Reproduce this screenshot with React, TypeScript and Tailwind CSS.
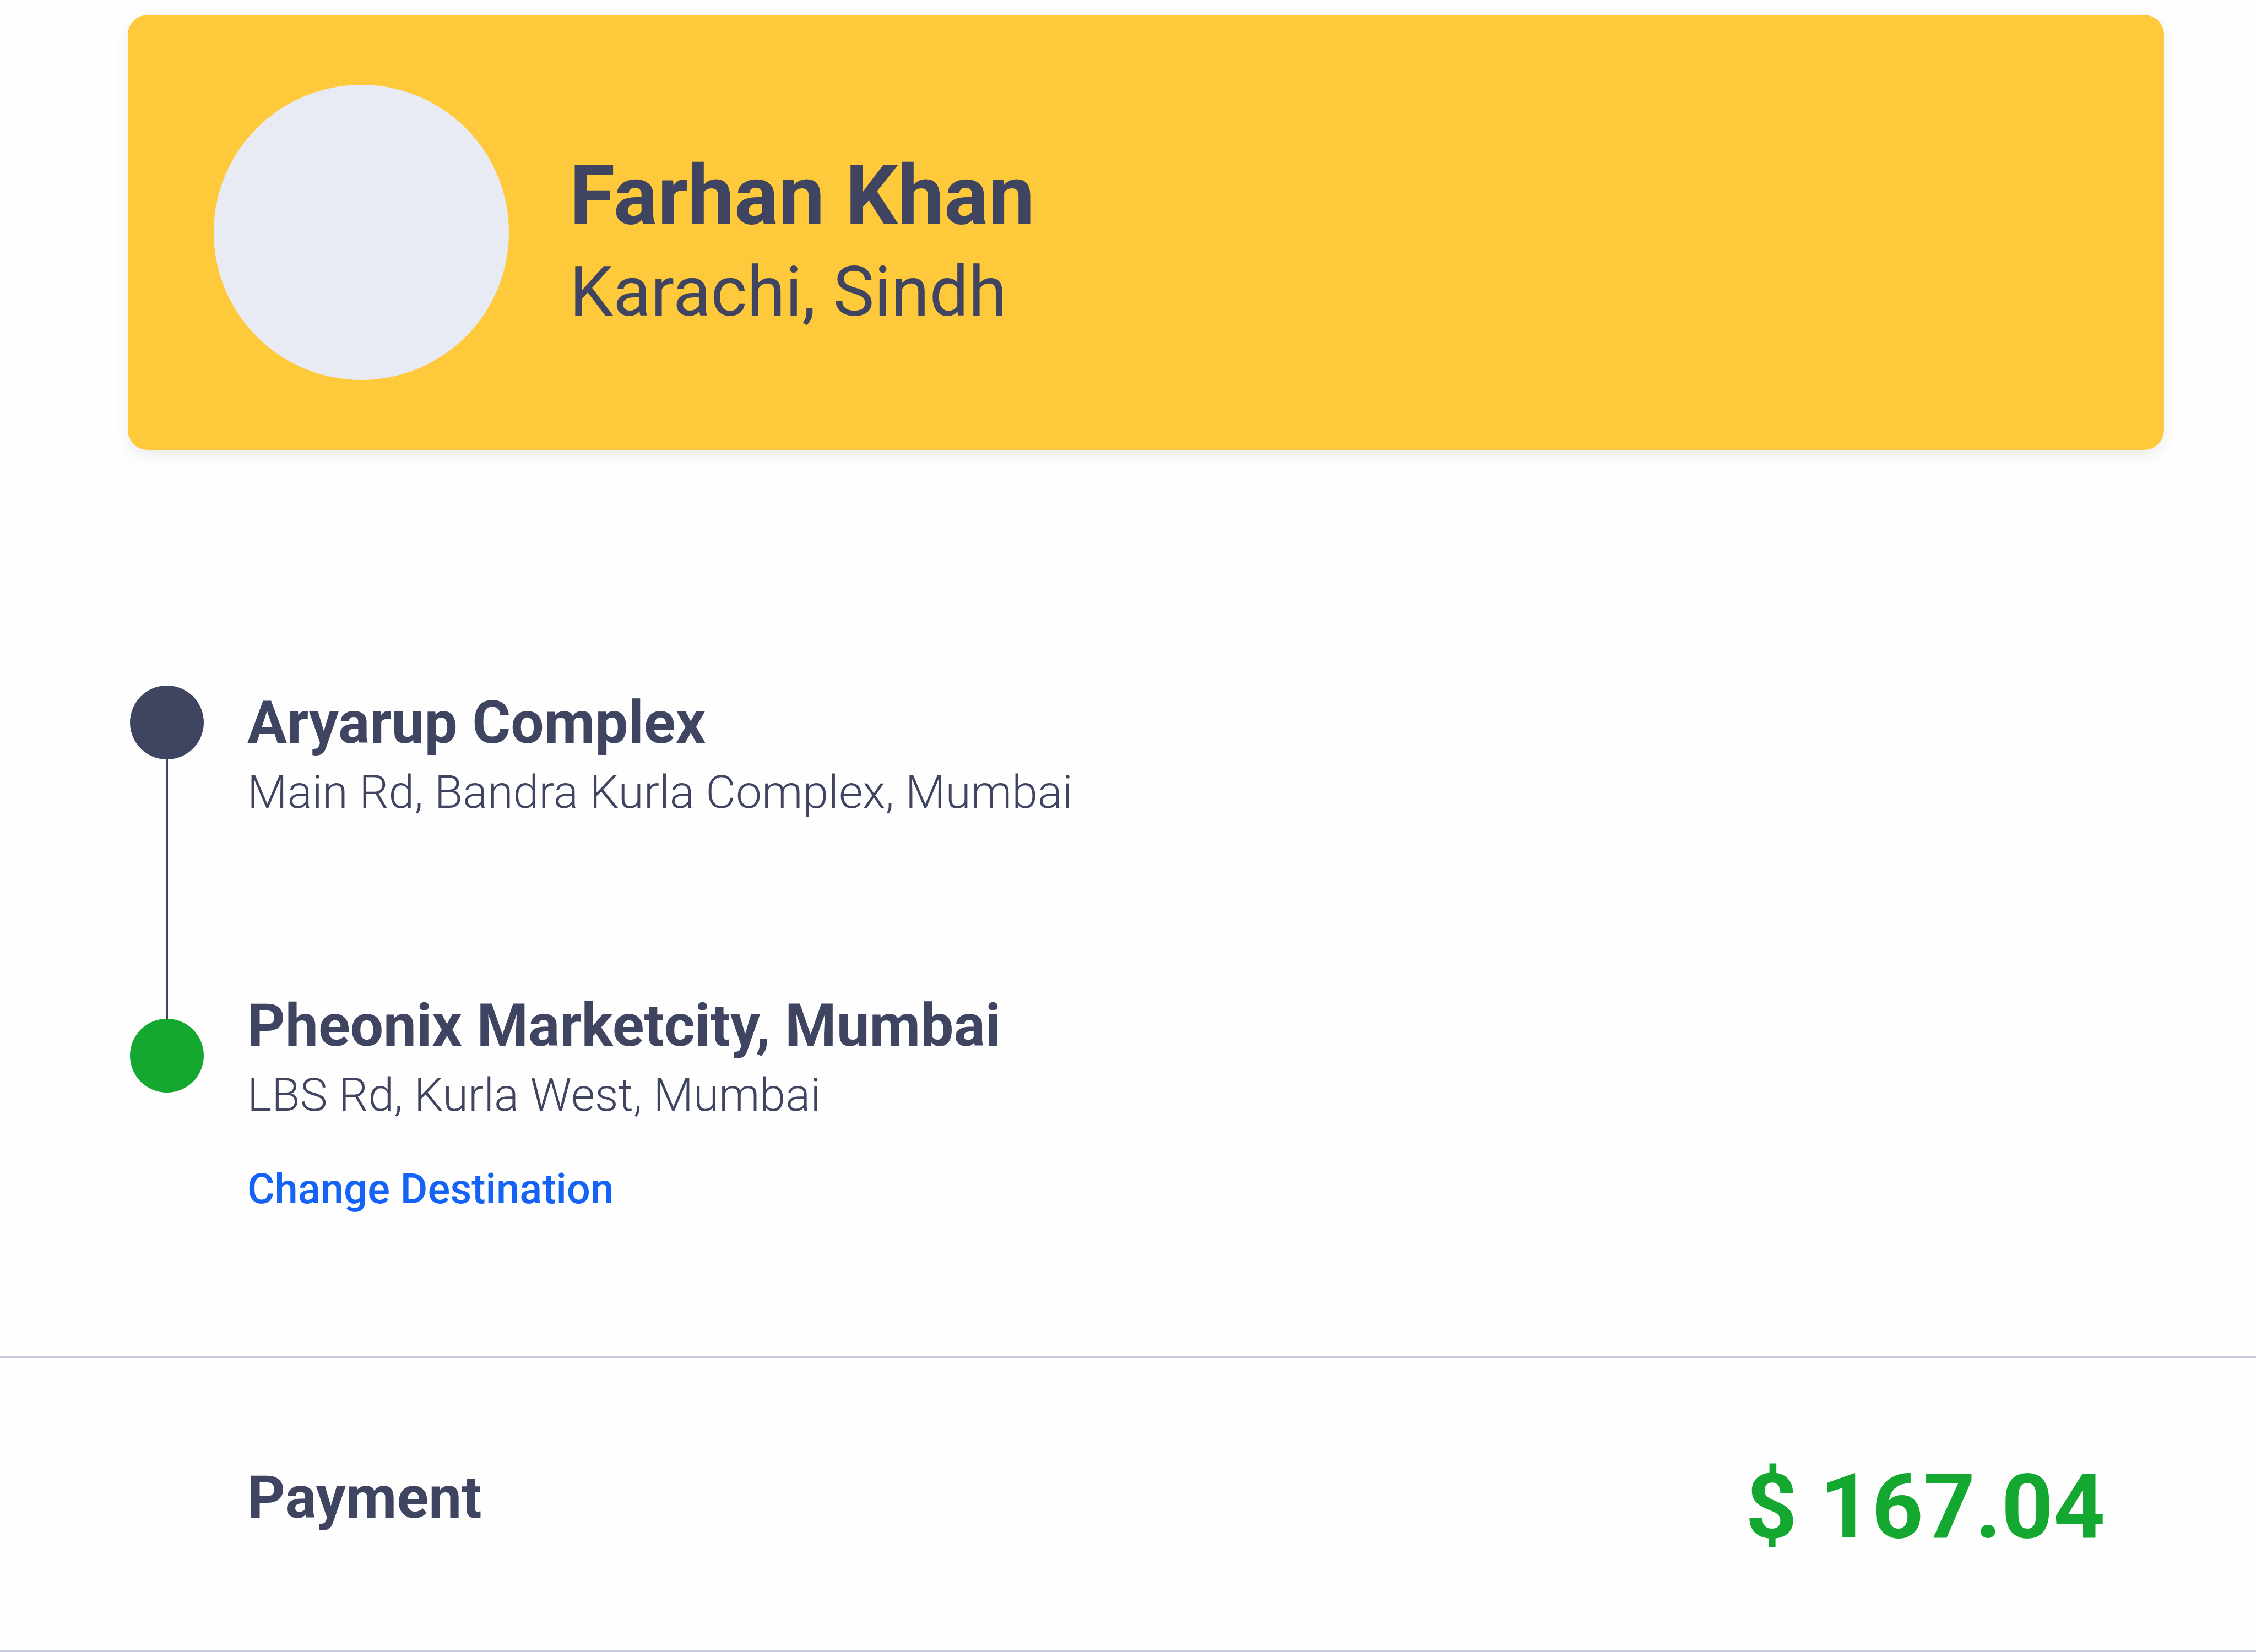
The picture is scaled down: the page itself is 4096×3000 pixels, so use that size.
type Stop = { name: string; address: string };

const pickup: Stop = { name: 'Aryarup Complex', address: 'Main Rd, Bandra Kurla Complex, Mumbai' };
const dropoff: Stop = { name: 'Pheonix Marketcity, Mumbai', address: 'LBS Rd, Kurla West, Mumbai' };

function StopText({ name, address }: Stop) {
  return (
    <div>
      <h2 className="text-[107px] leading-[128px] font-bold">{name}</h2>
      <p className="text-[84px] leading-[124px] font-light">{address}</p>
    </div>
  );
}

export default function App() {
  return (
    <main className="flex min-h-screen flex-col bg-[#fefefe] font-['Roboto',sans-serif] text-[#3f4461]">
      <header className="mt-[27px] mr-[167px] ml-[232px] flex h-[790px] items-center rounded-[36px] bg-[#ffc93c] pl-[156px] shadow-[0_10px_28px_rgba(0,0,0,0.08)]">
        <div className="size-[536px] shrink-0 rounded-full bg-[#e8ebf3]" />
        <div className="ml-[110px] pt-10">
          <h1 className="text-[150px] leading-[176px] font-bold">Farhan Khan</h1>
          <p className="text-[126px] leading-[172px]">Karachi, Sindh</p>
        </div>
      </header>

      <section className="mt-[428px] ml-[236px] flex">
        <div className="flex w-[134px] shrink-0 flex-col items-center">
          <span className="size-[134px] shrink-0 rounded-full bg-[#3f4461]" />
          <span className="h-[471px] w-1 bg-[#3f4461]" />
          <span className="size-[134px] shrink-0 rounded-full bg-[#15a831]" />
        </div>
        <div className="ml-[79px] flex flex-col items-start pt-1">
          <StopText {...pickup} />
          <div className="mt-[298px]">
            <StopText {...dropoff} />
          </div>
          <a href="#destination" className="mt-11 text-[76px] leading-[128px] font-medium text-[#1462f6]">
            Change Destination
          </a>
        </div>
      </section>

      <section className="mt-[240px] flex h-[537px] items-center justify-between border-y-4 border-[#c9cce0] pr-[274px] pl-[449px]">
        <h2 className="pb-6 text-[107px] leading-[128px] font-bold">Payment</h2>
        <strong className="pt-2 text-[164px] leading-[208px] font-bold text-[#15a831]">$ 167.04</strong>
      </section>
    </main>
  );
}
